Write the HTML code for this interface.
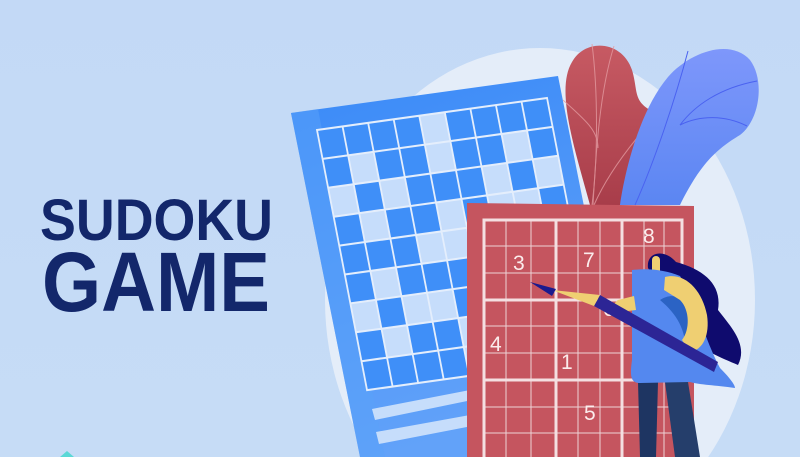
<!DOCTYPE html>
<html><head><style>
html,body{margin:0;padding:0;width:800px;height:457px;overflow:hidden;background:#c4daf6}
svg{display:block;position:absolute;left:0;top:0}
</style></head><body>
<svg width="800" height="457" viewBox="0 0 800 457" xmlns="http://www.w3.org/2000/svg">
<defs>
<linearGradient id="bg" x1="0" y1="0" x2="0" y2="1"><stop offset="0" stop-color="#c3d9f6"/><stop offset="1" stop-color="#c6dcf6"/></linearGradient>
<linearGradient id="paper" x1="0" y1="0" x2="0.3" y2="1"><stop offset="0" stop-color="#3a8af8"/><stop offset="1" stop-color="#62a2f9"/></linearGradient>
<linearGradient id="rleaf" x1="0" y1="0" x2="0" y2="1"><stop offset="0" stop-color="#c75a63"/><stop offset="1" stop-color="#a83d4a"/></linearGradient>
<linearGradient id="bleaf" x1="0" y1="0" x2="0" y2="1"><stop offset="0" stop-color="#7e97fb"/><stop offset="1" stop-color="#5b86f2"/></linearGradient>
</defs>
<rect width="800" height="457" fill="url(#bg)"/>
<ellipse cx="540" cy="300" rx="215" ry="252" fill="#e4edf9"/>
<path d="M590 205 C575 150 555 90 572 62 C585 38 622 40 632 70 C638 90 633 100 650 110 C665 122 665 145 650 165 C635 185 625 195 620 205 Z" fill="url(#rleaf)"/>
<g stroke="#e39aa0" stroke-width="1" fill="none" opacity="0.8"><path d="M592 44 C598 90 598 160 592 205"/><path d="M614 46 C600 90 596 150 593 205"/><path d="M563 100 C585 120 598 130 598 148"/><path d="M656 116 C625 150 605 180 594 205"/></g>
<path d="M620 205 C625 170 640 110 668 77 C690 52 730 38 750 60 C765 80 760 120 740 135 C715 150 700 165 680 205 Z" fill="url(#bleaf)"/>
<g stroke="#4a62f0" stroke-width="1" fill="none"><path d="M688 51 C675 100 655 160 635 205"/><path d="M757 81 C720 88 695 105 680 125"/><path d="M747 126 C725 115 700 115 680 125"/></g>
<polygon points="291,113 558,76 634,457 360,457" fill="url(#paper)"/>
<polygon points="291,113 318,109 385,457 360,457" fill="#5aa2fa" opacity="0.5"/>
<g transform="matrix(25.56,-3.56,5.56,28.9,317,130)">
<rect x="0" y="0" width="9" height="9" fill="#c6ddfb"/>
<g fill="#3f8ff8">
<rect x="0" y="0" width="4" height="1"/><rect x="5" y="0" width="4" height="1"/>
<rect x="0" y="1" width="1" height="1"/><rect x="2" y="1" width="2" height="1"/><rect x="5" y="1" width="2" height="1"/><rect x="8" y="1" width="1" height="1"/>
<rect x="1" y="2" width="1" height="1"/><rect x="3" y="2" width="3" height="1"/><rect x="7" y="2" width="1" height="1"/>
<rect x="0" y="3" width="1" height="1"/><rect x="2" y="3" width="2" height="1"/><rect x="5" y="3" width="1" height="1"/><rect x="8" y="3" width="1" height="1"/>
<rect x="0" y="4" width="3" height="1"/><rect x="6" y="4" width="2" height="1"/>
<rect x="0" y="5" width="1" height="1"/><rect x="2" y="5" width="2" height="1"/><rect x="4" y="5" width="2" height="1"/><rect x="8" y="5" width="1" height="1"/>
<rect x="1" y="6" width="1" height="1"/><rect x="4" y="6" width="1" height="1"/><rect x="6" y="6" width="2" height="1"/>
<rect x="0" y="7" width="1" height="1"/><rect x="2" y="7" width="2" height="1"/><rect x="5" y="7" width="2" height="1"/>
<rect x="0" y="8" width="4" height="1"/><rect x="6" y="8" width="3" height="1"/>
</g>
<g stroke="#e4eefc" stroke-width="0.07" fill="none">
<rect x="0" y="0" width="9" height="9"/>
<path d="M1 0V9M2 0V9M3 0V9M4 0V9M5 0V9M6 0V9M7 0V9M8 0V9M0 1H9M0 2H9M0 3H9M0 4H9M0 5H9M0 6H9M0 7H9M0 8H9"/>
</g>
</g>
<polygon points="372,409 470,390 472,400 375,420" fill="#c6ddfb"/>
<polygon points="376,432 470,415 472,426 379,444" fill="#c6ddfb"/>
<polygon points="467,203 694,206 694,457 467,457" fill="#c5555f"/>
<g stroke="#edd2d5" stroke-width="1" fill="none">
<path d="M506 220V457M531 220V457M578 220V457M600 220V457M644 220V457M664 220V457"/>
<path d="M484 246H682M484 273H682M484 326H682M484 353H682M484 407H682M484 433H682"/>
</g>
<g stroke="#f4dfe1" stroke-width="3" fill="none">
<path d="M484 457V220H682V457"/>
<path d="M556 220V457M622 220V457M484 300H682M484 380H682"/>
</g>
<g fill="#fbecec" font-family="Liberation Sans, sans-serif" font-size="21">
<text x="513" y="270">3</text><text x="583" y="267">7</text><text x="643" y="243">8</text><text x="603" y="316">6</text><text x="490" y="351">4</text><text x="561" y="369">1</text><text x="584" y="420">5</text>
</g>
<path d="M648 268 C646 252 664 248 676 262 C705 270 722 285 718 310 C732 328 748 345 738 365 C722 358 700 350 690 335 Z" fill="#0f0b6e"/>
<rect x="652" y="256" width="8" height="20" rx="4" fill="#efcf72"/>
<path d="M638 382 L658 382 L656 457 L640 457 Z" fill="#1e3562"/>
<path d="M665 382 L688 382 L700 457 L675 457 Z" fill="#253e6b"/>
<path d="M632 270 C650 268 665 270 680 276 C695 300 705 340 720 368 C730 378 735 385 735 388 C715 385 700 385 690 382 L640 383 C630 383 630 375 632 360 Z" fill="#5488ef"/>
<path d="M660 300 C675 290 690 300 694 320 C698 340 690 350 686 350 C685 330 678 315 660 300 Z" fill="#2b63c4"/>
<path d="M665 277 C685 272 702 290 707 315 C710 335 703 350 690 352 L682 340 C690 330 690 310 680 300 L664 290 Z" fill="#efcf72"/>
<path d="M618 300 C612 305 610 310 620 312 L636 310 L634 296 Z" fill="#efcf72"/>
<path d="M600 295 L718 362 L714 372 L594 306 Z" fill="#2c2595"/>
<path d="M552 290 L600 295 L594 306 Z" fill="#efcf72"/>
<path d="M530 282 L556 289 L552 296 Z" fill="#1a1a8e"/>
<g fill="#13276b" font-family="Liberation Sans, sans-serif" font-weight="bold">
<text x="40" y="240" font-size="58" textLength="233" lengthAdjust="spacingAndGlyphs">SUDOKU</text>
<text x="42" y="311" font-size="84" textLength="228" lengthAdjust="spacingAndGlyphs">GAME</text>
</g>
<polygon points="67,451 74,457 60,457" fill="#5ad8d6"/>
</svg>
</body></html>
